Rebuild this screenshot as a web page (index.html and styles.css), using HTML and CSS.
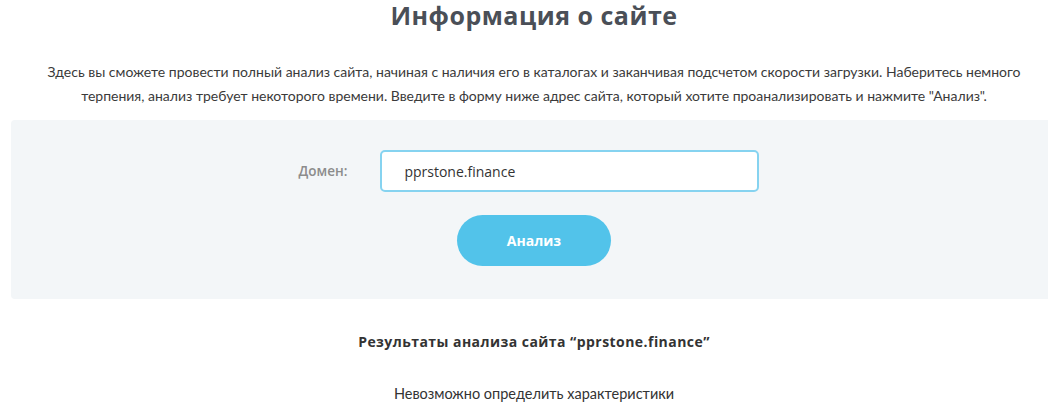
FILE: index.html
```html
<!DOCTYPE html>
<html lang="ru">
<head>
<meta charset="utf-8">
<title>Информация о сайте</title>
<link rel="stylesheet" href="styles.css">
</head>
<body>
<div class="page">
  <h1 class="title">Информация о сайте</h1>
  <p class="intro">Здесь вы сможете провести полный анализ сайта, начиная с наличия его в каталогах и заканчивая подсчетом скорости загрузки. Наберитесь немного<br>терпения, анализ требует некоторого времени. Введите в форму ниже адрес сайта, который хотите проанализировать и нажмите "Анализ".</p>
  <form class="panel">
    <div class="row">
      <label class="label" for="domain">Домен:</label>
      <input class="field" id="domain" type="text" value="pprstone.finance">
    </div>
    <button class="btn" type="button">Анализ</button>
  </form>
  <h2 class="result-title">Результаты анализа сайта “pprstone.finance”</h2>
  <p class="result-text">Невозможно определить характеристики</p>
</div>
</body>
</html>
```
FILE: styles.css
```css
html, body {
  margin: 0;
  padding: 0;
  background: #ffffff;
  overflow: hidden;
}
.page {
  width: 1046px;
  margin-left: 11px;
  display: flex;
  flex-direction: column;
  align-items: center;
  font-family: "Lato", "Liberation Sans", sans-serif;
  color: #333;
}
.title {
  margin: 0;
  padding-top: 0;
  font-family: "Open Sans", "Liberation Sans", sans-serif;
  font-weight: 700;
  font-size: 25px;
  letter-spacing: 0.5px;
  line-height: 30px;
  color: #4a4f57;
}
.intro {
  margin: 30px 0 0;
  font-size: 14px;
  line-height: 24px;
  text-align: center;
  color: #3a3a3a;
}
.panel {
  margin-top: 12px;
  align-self: stretch;
  height: 179px;
  box-sizing: border-box;
  background: #f3f6f8;
  border-radius: 4px;
  display: flex;
  flex-direction: column;
  align-items: center;
  padding-top: 30px;
}
.row {
  display: flex;
  align-items: center;
  gap: 33px;
  padding-right: 10px;
}
.label {
  font-family: "Open Sans", "Liberation Sans", sans-serif;
  font-weight: 600;
  font-size: 13.5px;
  color: #8c8c8c;
}
.field {
  width: 379px;
  height: 42px;
  box-sizing: border-box;
  border: 2px solid #86d3f0;
  border-radius: 5px;
  background: #fff;
  padding: 0 0 0 22px;
  font-family: "Open Sans", "Liberation Sans", sans-serif;
  font-weight: 500;
  font-size: 14px;
  color: #333;
  outline: none;
}
.btn {
  margin-top: 23px;
  width: 154px;
  height: 51px;
  border: none;
  border-radius: 26px;
  background: #52c3ea;
  color: #fff;
  font-family: "Open Sans", "Liberation Sans", sans-serif;
  font-weight: 700;
  font-size: 14px;
  cursor: pointer;
}
.result-title {
  margin: 31px 0 0;
  font-family: "Open Sans", "Liberation Sans", sans-serif;
  font-weight: 700;
  font-size: 14px;
  letter-spacing: 0.45px;
  line-height: 24px;
  color: #333;
}
.result-text {
  margin: 28px 0 0;
  font-size: 14.5px;
  line-height: 24px;
  color: #333;
}
```
